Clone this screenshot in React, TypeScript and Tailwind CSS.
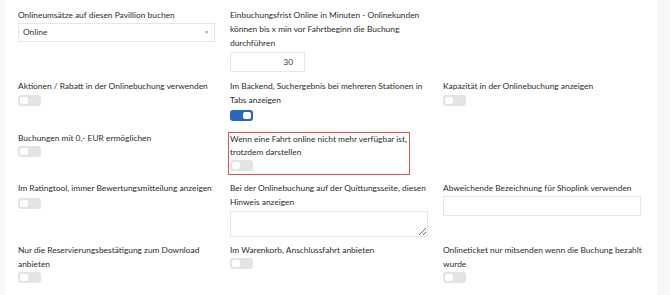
import React from 'react';

const font = { fontFamily: 'Lato, "Liberation Sans", sans-serif' };

const Toggle = ({ on = false, className = '' }: { on?: boolean; className?: string }) => (
  <div
    className={`flex h-[11px] w-[23px] items-center rounded-[3px] px-[2px] ${
      on ? 'justify-end bg-[#2a66bf]' : 'justify-start bg-[#e4e4e4]'
    } ${className}`}
  >
    <div className="h-[7px] w-[8px] rounded-[2px] bg-white" />
  </div>
);

const Label = ({ children }: { children: React.ReactNode }) => (
  <div className="whitespace-nowrap text-[8.4px] leading-[14px] text-[#2b2b2b]">{children}</div>
);

export default function App() {
  return (
    <div className="h-[295px] w-[670px] overflow-hidden bg-[#f7f7f7]" style={font}>
      <div className="ml-[6px] h-full w-[651px] bg-white pl-[12px] pt-[8px]">
        <div className="grid grid-cols-[197px_198px_197px] grid-rows-[71px_52px_50px_62px_auto] gap-x-[15px]">
          {/* row 1 */}
          <div>
            <Label>Onlineumsätze auf diesen Pavillion buchen</Label>
            <div className="mt-[1px] flex h-[19px] items-center justify-between border border-[#e6e6e6] bg-white pl-[4px] pr-[5px] text-[8.4px] text-[#333]">
              <span>Online</span>
              <span className="text-[5px] text-[#999]">▼</span>
            </div>
          </div>
          <div>
            <Label>
              Einbuchungsfrist Online in Minuten - Onlinekunden
              <br />
              können bis x min vor Fahrtbeginn die Buchung
              <br />
              durchführen
            </Label>
            <div className="mt-[2px] flex h-[20px] w-[75px] items-center justify-end border border-[#e6e6e6] pr-[11px] text-[8.4px] text-[#333]">
              30
            </div>
          </div>
          <div />

          {/* row 2 */}
          <div>
            <Label>Aktionen / Rabatt in der Onlinebuchung verwenden</Label>
            <Toggle className="mt-[2px]" />
          </div>
          <div>
            <Label>
              Im Backend, Suchergebnis bei mehreren Stationen in
              <br />
              Tabs anzeigen
            </Label>
            <Toggle on className="mt-[3px]" />
          </div>
          <div>
            <Label>Kapazität in der Onlinebuchung anzeigen</Label>
            <Toggle className="mt-[2px]" />
          </div>

          {/* row 3 */}
          <div>
            <Label>Buchungen mit 0,- EUR ermöglichen</Label>
            <Toggle className="mt-[1px]" />
          </div>
          <div>
            <div className="-ml-[2px] mt-[1px] w-fit border border-[#d9534f] pb-[3px] pl-[1px] pr-[2px]">
              <div className="whitespace-nowrap text-[8.4px] leading-[13px] text-[#2b2b2b]">
                Wenn eine Fahrt online nicht mehr verfügbar ist,
                <br />
                trotzdem darstellen
              </div>
              <Toggle className="mt-[1px]" />
            </div>
          </div>
          <div />

          {/* row 4 */}
          <div>
            <Label>Im Ratingtool, immer Bewertungsmitteilung anzeigen</Label>
            <Toggle className="mt-[3px]" />
          </div>
          <div>
            <Label>
              Bei der Onlinebuchung auf der Quittungsseite, diesen
              <br />
              Hinweis anzeigen
            </Label>
            <textarea className="mt-[2px] block h-[26px] w-[198px] border border-[#e6e6e6] outline-none" />
          </div>
          <div>
            <Label>Abweichende Bezeichnung für Shoplink verwenden</Label>
            <div className="mt-[1px] h-[20px] w-[198px] border border-[#e6e6e6]" />
          </div>

          {/* row 5 */}
          <div>
            <Label>
              Nur die Reservierungsbestätigung zum Download
              <br />
              anbieten
            </Label>
            <Toggle className="mt-[1px]" />
          </div>
          <div>
            <Label>Im Warenkorb, Anschlussfahrt anbieten</Label>
            <Toggle className="mt-[1px]" />
          </div>
          <div>
            <Label>
              Onlineticket nur mitsenden wenn die Buchung bezahlt
              <br />
              wurde
            </Label>
            <Toggle className="mt-[1px]" />
          </div>
        </div>
      </div>
    </div>
  );
}
